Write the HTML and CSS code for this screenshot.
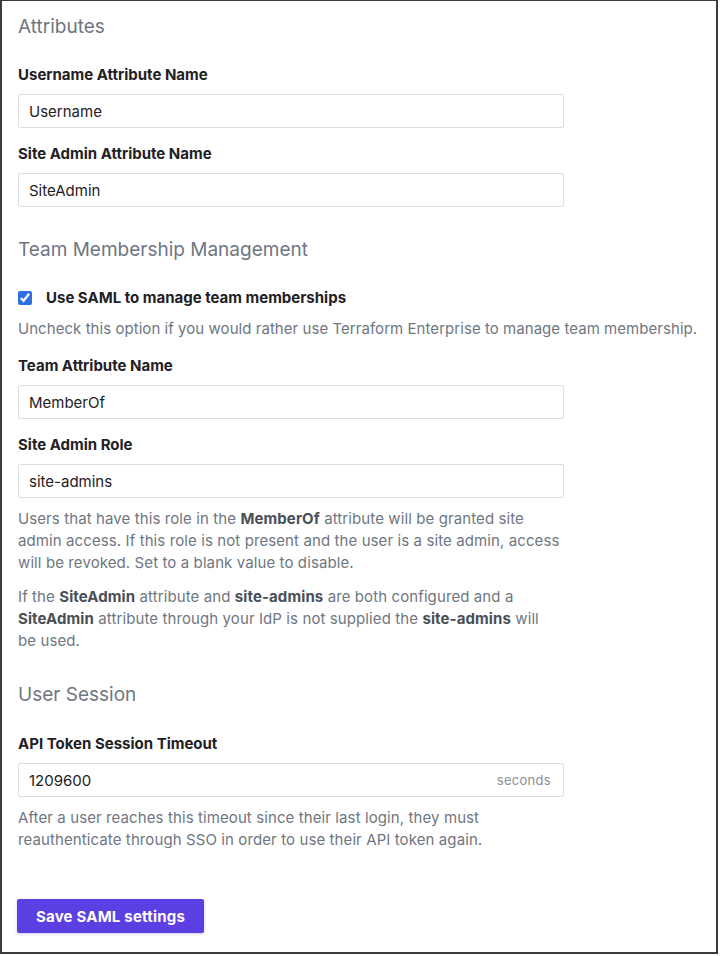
FILE: index.html
```html
<!DOCTYPE html>
<html>
<head>
<meta charset="utf-8">
<link rel="stylesheet" href="styles.css">
</head>
<body>
<div class="frame">
  <h2 class="section-title first">Attributes</h2>
  <label class="field-label">Username Attribute Name</label>
  <div class="input"><span>Username</span></div>
  <label class="field-label next">Site Admin Attribute Name</label>
  <div class="input"><span>SiteAdmin</span></div>

  <h2 class="section-title">Team Membership Management</h2>
  <div class="check-row">
    <input type="checkbox" class="check" checked>
    <span class="check-label">Use SAML to manage team memberships</span>
  </div>
  <p class="help wide">Uncheck this option if you would rather use Terraform Enterprise to manage team membership.</p>
  <label class="field-label after-help">Team Attribute Name</label>
  <div class="input"><span>MemberOf</span></div>
  <label class="field-label next">Site Admin Role</label>
  <div class="input"><span>site-admins</span></div>
  <p class="help">Users that have this role in the <b>MemberOf</b> attribute will be granted site admin access. If this role is not present and the user is a site admin, access will be revoked. Set to a blank value to disable.</p>
  <p class="help second">If the <b>SiteAdmin</b> attribute and <b>site-admins</b> are both configured and a <b>SiteAdmin</b> attribute through your IdP is not supplied the <b>site-admins</b> will<br>be used.</p>

  <h2 class="section-title">User Session</h2>
  <label class="field-label after-title">API Token Session Timeout</label>
  <div class="input"><span>1209600</span><span class="suffix">seconds</span></div>
  <p class="help">After a user reaches this timeout since their last login, they must reauthenticate through SSO in order to use their API token again.</p>

  <button class="btn-primary">Save SAML settings</button>
</div>
</body>
</html>
```

FILE: styles.css
```css
html, body {
  margin: 0;
  padding: 0;
  background: #ffffff;
}
body {
  font-family: Inter, "Liberation Sans", Arial, sans-serif;
  color: #1f2124;
}
.frame {
  box-sizing: border-box;
  width: 718px;
  height: 954px;
  border: 2px solid #3a3a3a;
  border-top-width: 1px;
  padding: 12px 16px 0 16px;
  background: #fff;
}
.section-title {
  margin: 29px 0 0 0;
  font-size: 19px;
  line-height: 28px;
  font-weight: 400;
  color: #6f7682;
}
.section-title.first {
  margin-top: 0;
}
.field-label {
  display: block;
  margin: 24px 0 9px 0;
  font-size: 15px;
  line-height: 20px;
  font-weight: 700;
  color: #1f2124;
}
.field-label.next {
  margin-top: 16px;
}
.field-label.after-help {
  margin-top: 16px;
  margin-bottom: 9px;
}
.field-label.after-title {
  margin-top: 25px;
}
.input {
  box-sizing: border-box;
  width: 546px;
  height: 34px;
  border: 1px solid #dcdee2;
  border-radius: 2px;
  padding: 0 12px 0 10px;
  display: flex;
  align-items: center;
  justify-content: space-between;
  font-size: 15px;
  color: #1f2124;
}
.suffix {
  font-size: 13px;
  color: #8a8f98;
  letter-spacing: 0.3px;
}
.check-row {
  margin-top: 24px;
  display: flex;
  align-items: center;
  height: 20px;
}
.check {
  width: 14px;
  height: 14px;
  margin: 0 14px 0 0;
  accent-color: #2f6fe4;
}
.check-label {
  font-size: 15px;
  font-weight: 700;
  line-height: 20px;
  color: #1f2124;
}
.help {
  margin: 10px 0 0 0;
  width: 548px;
  font-size: 15px;
  line-height: 22px;
  letter-spacing: 0.1px;
  color: #6f7682;
}
.help.wide {
  width: auto;
  white-space: nowrap;
  letter-spacing: 0.05px;
}
.help.second {
  margin-top: 12px;
}
.help b {
  color: #4a4f57;
  font-weight: 700;
}
.btn-primary {
  display: block;
  margin-top: 48px;
  width: 187px;
  height: 34px;
  margin-left: -1px;
  border: none;
  border-radius: 2px;
  background: #5b3fe3;
  color: #ffffff;
  font-family: Inter, "Liberation Sans", Arial, sans-serif;
  font-size: 15px;
  font-weight: 700;
  letter-spacing: 0.2px;
  box-shadow: 0 1px 3px rgba(60, 40, 180, 0.25);
}
```
